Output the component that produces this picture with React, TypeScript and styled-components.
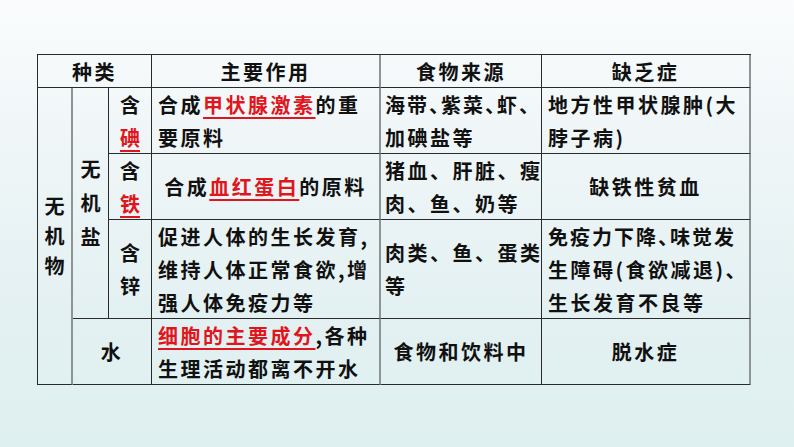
import React from "react";
import styled, { createGlobalStyle } from "styled-components";

const Global = createGlobalStyle`
  html, body { margin: 0; padding: 0; }
  body {
    width: 794px;
    height: 447px;
    overflow: hidden;
    background: linear-gradient(180deg, #fafcfd 0%, #eef5f7 35%, #e2f0f1 75%, #dff0f0 100%);
    font-family: "Noto Sans CJK SC", "Noto Sans", sans-serif;
  }
`;

const Page = styled.div`
  padding: 54px 0 0 37px;
`;

const Grid = styled.div`
  display: grid;
  grid-template-columns: 35px 36px 43px 229px 161px 209px;
  grid-template-rows: 33px 66px 66px 99px 66px;
  width: max-content;
  border-top: 1px solid #2a2a2a;
  border-left: 1px solid #2a2a2a;
  color: #111;
  font-size: 20px;
  font-weight: 700;
  letter-spacing: 2.5px;
`;

type CellProps = {
  $col: string;
  $row: string;
  $align?: "left" | "center";
  $rightLine?: "dark" | "gray";
  $padL?: number;
};

const Cell = styled.div<CellProps>`
  grid-column: ${(p) => p.$col};
  grid-row: ${(p) => p.$row};
  box-sizing: border-box;
  border-bottom: 1px solid #2a2a2a;
  border-right: ${(p) => (p.$rightLine === "gray" ? "2px solid #8d9496" : "1px solid #2a2a2a")};
  display: flex;
  flex-direction: column;
  justify-content: center;
  align-items: ${(p) => (p.$align === "left" ? "flex-start" : "center")};
  padding-left: ${(p) => p.$padL ?? 0}px;
  line-height: 33px;
  white-space: nowrap;
`;

const VText = styled.div<{ $lh?: number }>`
  display: flex;
  flex-direction: column;
  align-items: center;
  line-height: ${(p) => p.$lh ?? 32}px;
  letter-spacing: 0;
`;

const Line = styled.div<{ $tight?: boolean }>`
  line-height: 33px;
  font-feature-settings: ${(p) => (p.$tight ? '"halt"' : "normal")};
  letter-spacing: ${(p) => (p.$tight ? "2px" : "inherit")};
`;

const Red = styled.span`
  color: #e0161c;
  text-decoration: underline;
  text-decoration-color: #e0161c;
  text-decoration-thickness: 2px;
  text-underline-offset: 4px;
`;

export default function App() {
  return (
    <>
      <Global />
      <Page>
        <Grid>
          {/* header */}
          <Cell $col="1 / 4" $row="1">种类</Cell>
          <Cell $col="4" $row="1" $rightLine="gray">主要作用</Cell>
          <Cell $col="5" $row="1">食物来源</Cell>
          <Cell $col="6" $row="1" $rightLine="gray">缺乏症</Cell>

          {/* category columns */}
          <Cell $col="1" $row="2 / 6" $rightLine="gray">
            <VText $lh={30}>
              <span>无</span>
              <span>机</span>
              <span>物</span>
            </VText>
          </Cell>
          <Cell $col="2" $row="2 / 5">
            <VText $lh={34}>
              <span>无</span>
              <span>机</span>
              <span>盐</span>
            </VText>
          </Cell>

          {/* iodine */}
          <Cell $col="3" $row="2">
            <VText $lh={33}>
              <span>含</span>
              <Red>碘</Red>
            </VText>
          </Cell>
          <Cell $col="4" $row="2" $align="left" $padL={6} $rightLine="gray">
            <Line>
              合成<Red>甲状腺激素</Red>的重
            </Line>
            <Line>要原料</Line>
          </Cell>
          <Cell $col="5" $row="2" $align="left" $padL={4}>
            <Line $tight>海带、紫菜、虾、</Line>
            <Line>加碘盐等</Line>
          </Cell>
          <Cell $col="6" $row="2" $align="left" $padL={6} $rightLine="gray">
            <Line>地方性甲状腺肿(大</Line>
            <Line>脖子病)</Line>
          </Cell>

          {/* iron */}
          <Cell $col="3" $row="3">
            <VText $lh={33}>
              <span>含</span>
              <Red>铁</Red>
            </VText>
          </Cell>
          <Cell $col="4" $row="3" $rightLine="gray">
            <Line>
              合成<Red>血红蛋白</Red>的原料
            </Line>
          </Cell>
          <Cell $col="5" $row="3" $align="left" $padL={4}>
            <Line>猪血、肝脏、瘦</Line>
            <Line>肉、鱼、奶等</Line>
          </Cell>
          <Cell $col="6" $row="3" $rightLine="gray">
            <Line>缺铁性贫血</Line>
          </Cell>

          {/* zinc */}
          <Cell $col="3" $row="4">
            <VText $lh={33}>
              <span>含</span>
              <span>锌</span>
            </VText>
          </Cell>
          <Cell $col="4" $row="4" $align="left" $padL={6} $rightLine="gray">
            <Line>促进人体的生长发育,</Line>
            <Line>维持人体正常食欲,增</Line>
            <Line>强人体免疫力等</Line>
          </Cell>
          <Cell $col="5" $row="4" $align="left" $padL={4}>
            <Line>肉类、鱼、蛋类</Line>
            <Line>等</Line>
          </Cell>
          <Cell $col="6" $row="4" $align="left" $padL={6} $rightLine="gray">
            <Line $tight>免疫力下降、味觉发</Line>
            <Line>生障碍(食欲减退)、</Line>
            <Line>生长发育不良等</Line>
          </Cell>

          {/* water */}
          <Cell $col="2 / 4" $row="5">水</Cell>
          <Cell $col="4" $row="5" $align="left" $padL={6} $rightLine="gray">
            <Line>
              <Red>细胞的主要成分</Red>,各种
            </Line>
            <Line>生理活动都离不开水</Line>
          </Cell>
          <Cell $col="5" $row="5">
            <Line>食物和饮料中</Line>
          </Cell>
          <Cell $col="6" $row="5" $rightLine="gray">
            <Line>脱水症</Line>
          </Cell>
        </Grid>
      </Page>
    </>
  );
}
